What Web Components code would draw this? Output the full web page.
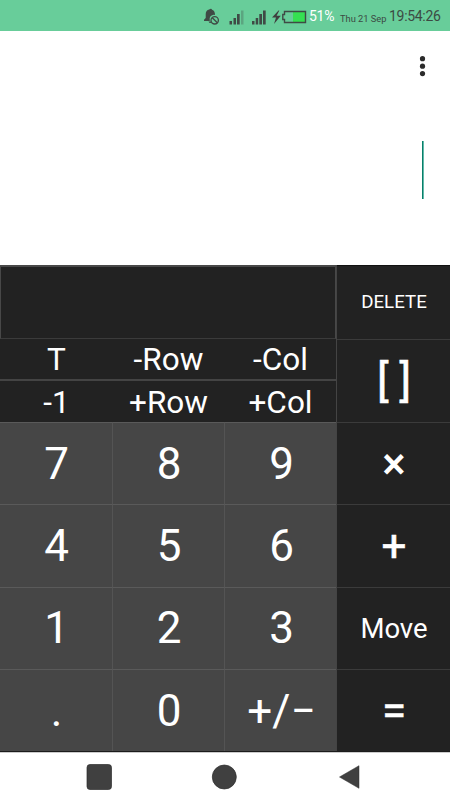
<!DOCTYPE html>
<html lang="en">
<head>
<meta charset="utf-8">
<title>Matrix calculator</title>
<style>
  body {
    margin: 0;
    background: #ffffff;
    font-family: Roboto, "Liberation Sans", sans-serif;
  }
</style>
</head>
<body>
<calc-screen>
  <status-bar battery="51%" date="Thu 21 Sep" time="19:54:26"></status-bar>
  <calc-display></calc-display>
  <calc-keypad></calc-keypad>
  <nav-bar></nav-bar>
</calc-screen>

<script>
class CalcScreen extends HTMLElement {
  constructor() {
    super();
    this.attachShadow({ mode: "open" }).innerHTML = `
    <style>
      :host {
        display: grid;
        grid-template-rows: 31px 234px 487px 48px;
        width: 450px;
        height: 800px;
        overflow: hidden;
      }
    </style>
    <slot></slot>`;
  }
}
customElements.define("calc-screen", CalcScreen);


class StatusBar extends HTMLElement {
  connectedCallback() {
    const shadow = this.attachShadow({ mode: "open" });
    shadow.innerHTML = `
    <style>
      :host {
        display: flex;
        align-items: center;
        justify-content: flex-end;
        box-sizing: border-box;
        padding: 1px 10px 0 0;
        background: #68cd9a;
        color: #3c4a43;
        white-space: nowrap;
      }
      svg { display: block; flex: none; margin-top: -1px; }
      .battery { color: #ffffff; font-size: 14px; letter-spacing: -0.3px; width: 26px; margin-left: 2px; }
      .date { font-size: 9.300px; width: 47px; margin: 4px 2px 0 5px; }
      .time { font-size: 14px; width: 51px; letter-spacing: -0.3px; }
    </style>
    <svg width="104" height="30" viewBox="203 0 104 30">
      <!-- muted bell -->
      <path d="M210 8q1.500-.8 2 .7c2.400.8 3 2.800 3 5.200a4.500 4.500 0 0 0-5.200 6.100H204v-1.300l1.700-1.700v-4c0-2.300 1.300-4 3.500-4.500zM208.500 20.600h2.400v1.500q-1.700.2-2.400-1.500z" fill="#3f4a45"/>
      <circle cx="214.700" cy="19.300" r="3.700" fill="none" stroke="#3f4a45" stroke-width="1.300"/>
      <path d="M212.300 16.700l5 5" stroke="#3f4a45" stroke-width="1.300"/>
      <!-- signal bars -->
      <g fill="#3f4a45">
        <path d="M229.500 20h2.500v3.500h-2.500zM233.500 17h2.500v6.500h-2.500zM237 13h2.700v10.500H237z"/>
        <path d="M241 9.500h2.500v14H241z" opacity=".3"/>
        <path d="M252 20h2.500v3.500H252zM255.700 17h2.500v6.500h-2.500zM259.300 13h2.700v10.500h-2.700zM263 9.500h2.700v14H263z"/>
      </g>
      <!-- charging battery -->
      <path d="M278.500 9.500l-6.500 7h4l-2 6.500 6.800-8.300h-4.200l2.700-5.200z" fill="#3f3f3f"/>
      <path d="M293 11h12v10h-12z" fill="#35e052"/>
      <path d="M284.500 10.500h21v11h-21v-3h-1.700v-5h1.700z" fill="none" stroke="#3f4a45" stroke-width="1.400"/>
    </svg>
    <span class="battery">${this.getAttribute("battery")}</span>
    <span class="date">${this.getAttribute("date")}</span>
    <span class="time">${this.getAttribute("time")}</span>`;
  }
}
customElements.define("status-bar", StatusBar);


class CalcDisplay extends HTMLElement {
  constructor() {
    super();
    this.attachShadow({ mode: "open" }).innerHTML = `
    <style>
      :host {
        display: flex;
        flex-direction: column;
        align-items: flex-end;
        background: #ffffff;
      }
      .menu { display: block; margin: 24px 20px 0 0; }
      .cursor {
        width: 1px;
        height: 58px;
        margin: 64px 26px 0 0;
        background: #087f69;
        border-right: 1px solid #62b8a9;
      }
    </style>
    <svg class="menu" width="15" height="22" viewBox="0 0 15 22" fill="#2b2b2b">
      <circle cx="7.500" cy="3.700" r="2.600"/>
      <circle cx="7.500" cy="11.200" r="2.600"/>
      <circle cx="7.500" cy="18.600" r="2.600"/>
    </svg>
    <div class="cursor"></div>`;
  }
}
customElements.define("calc-display", CalcDisplay);


class CalcKey extends HTMLElement {
  connectedCallback() {
    const shadow = this.attachShadow({ mode: "open" });
    shadow.innerHTML = `
    <style>
      :host {
        display: flex;
        align-items: center;
        justify-content: center;
        box-sizing: border-box;
        min-width: 0;
        padding-left: 1px;
        border-top: 1px solid #3b3b3b;
        background: #222222;
        color: #ffffff;
        font-size: 44px;
        line-height: 1;
        white-space: pre;
      }
      :host([kind="number"]) {
        padding-left: 1px;
        background: #464646;
        border-top-color: #5a5a5a;
        border-right: 1px solid #545454;
      }
      :host([kind="edge"]) {
        padding-left: 2px;
        background: #464646;
        border-top-color: #5a5a5a;
      }
      :host([kind="matrix"]) { font-size: 31.500px; padding-top: 2px; border: 0; }
      :host([size="small"]) { font-size: 18.700px; }
      :host([size="medium"]) { font-size: 27.500px; padding-top: 1px; }
      :host([weight="medium"]) { font-weight: 500; }
      :host([weight="book"]) { -webkit-text-stroke: 0.5px #ffffff; }
      :host([row="last"]) { padding-top: 2px; }
    </style>
    <slot></slot>`;
  }
}
customElements.define("calc-key", CalcKey);


class CalcKeypad extends HTMLElement {
  constructor() {
    super();
    this.attachShadow({ mode: "open" }).innerHTML = `
    <style>
      :host {
        display: grid;
        grid-template-columns: 336px 114px;
        background: #222222;
        box-sizing: border-box;
        border-bottom: 1px solid #1b1b1b;
      }
      .left {
        display: grid;
        grid-template-rows: 74px 42px 41px 1fr;
      }
      .preview {
        border: 1px solid #484848;
        border-top: 2px solid #484848;
        border-bottom-color: #3b3b3b;
      }
      .row { display: grid; grid-template-columns: 1fr 1fr 1fr; }
      .minus { border-bottom: 2px solid #444444; }
      .numbers {
        display: grid;
        grid-template-columns: 113px 112px 111px;
        grid-template-rows: repeat(4, 1fr);
      }
      .right {
        display: grid;
        grid-template-rows: 74px 83px repeat(4, 1fr);
        border-left: 1px solid #444444;
      }
      .right calc-key:first-child { border-top-color: #111111; }
    </style>
    <div class="left">
      <div class="preview"></div>
      <div class="row minus">
        <calc-key kind="matrix">T</calc-key>
        <calc-key kind="matrix">-Row</calc-key>
        <calc-key kind="matrix">-Col</calc-key>
      </div>
      <div class="row">
        <calc-key kind="matrix">-1</calc-key>
        <calc-key kind="matrix">+Row</calc-key>
        <calc-key kind="matrix">+Col</calc-key>
      </div>
      <div class="numbers">
        <calc-key kind="number">7</calc-key>
        <calc-key kind="number">8</calc-key>
        <calc-key kind="edge">9</calc-key>
        <calc-key kind="number">4</calc-key>
        <calc-key kind="number">5</calc-key>
        <calc-key kind="edge">6</calc-key>
        <calc-key kind="number">1</calc-key>
        <calc-key kind="number">2</calc-key>
        <calc-key kind="edge">3</calc-key>
        <calc-key kind="number" row="last">.</calc-key>
        <calc-key kind="number" row="last">0</calc-key>
        <calc-key kind="edge" row="last">+/−</calc-key>
      </div>
    </div>
    <div class="right">
      <calc-key size="small">DELETE</calc-key>
      <calc-key weight="book">[ ]</calc-key>
      <calc-key weight="medium">×</calc-key>
      <calc-key weight="book">+</calc-key>
      <calc-key size="medium">Move</calc-key>
      <calc-key weight="book" row="last">=</calc-key>
    </div>`;
  }
}
customElements.define("calc-keypad", CalcKeypad);


class NavBar extends HTMLElement {
  constructor() {
    super();
    this.attachShadow({ mode: "open" }).innerHTML = `
    <style>
      :host {
        display: flex;
        justify-content: space-between;
        align-items: center;
        box-sizing: border-box;
        padding: 1px 85px 0 82px;
        border-top: 1px solid #cccccc;
        background: #ffffff;
      }
      svg { display: block; }
    </style>
    <svg width="34" height="34" viewBox="0 0 34 34"><rect x="5" y="4.500" width="24.500" height="25" rx="3" fill="#404040" stroke="#2c2c2c" stroke-width=".7"/></svg>
    <svg width="34" height="34" viewBox="0 0 34 34"><circle cx="17.300" cy="17" r="12" fill="#404040" stroke="#2c2c2c" stroke-width=".7"/></svg>
    <svg width="34" height="34" viewBox="0 0 34 34"><path d="M8.500 17L28 5.700v22.600z" fill="#404040" stroke="#2c2c2c" stroke-width=".5"/></svg>`;
  }
}
customElements.define("nav-bar", NavBar);
</script>
</body>
</html>
